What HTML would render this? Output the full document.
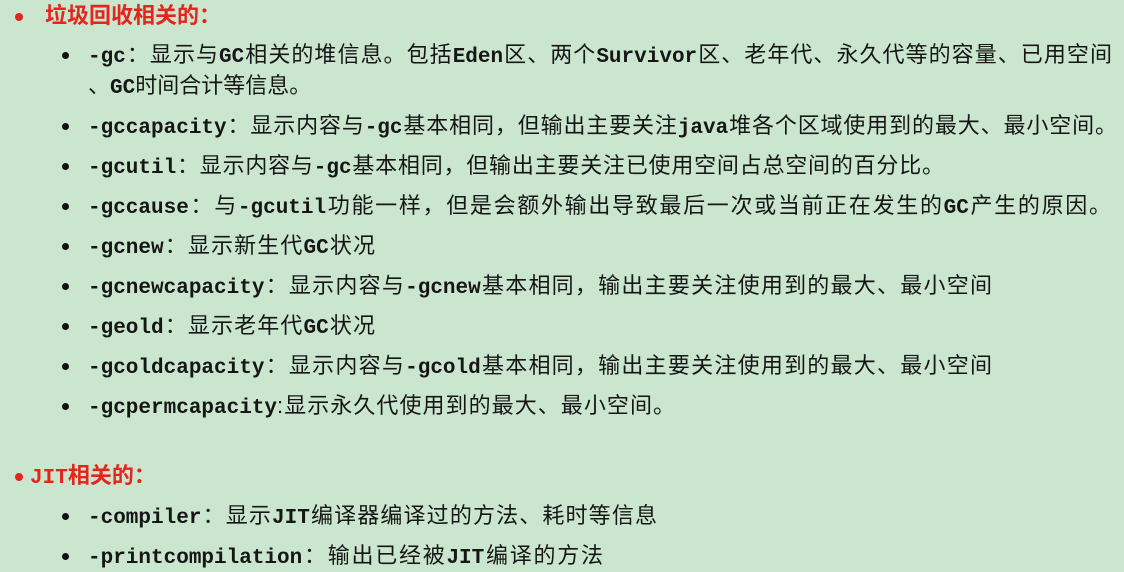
<!DOCTYPE html>
<html><head><meta charset="utf-8"><style>
body{margin:0;width:1124px;height:572px;background:#cbe6cf;overflow:hidden;position:relative;font-family:"Liberation Sans","Noto Sans CJK SC",sans-serif;color:#161616;font-size:22px}
.l{position:absolute;white-space:nowrap;line-height:26px;text-align:justify;text-align-last:justify;text-justify:inter-character}
.m{font-family:"Liberation Mono","Noto Sans CJK SC",monospace;font-weight:bold;font-size:21px}
.h{color:#e3251c;font-weight:bold;left:45px}
.rb{position:absolute;left:15px;width:8px;height:8px;border-radius:50%;background:#e3251c}
.b{position:absolute;left:62px;width:7px;height:7px;border-radius:50%;background:#111}
.t{left:88px}
</style></head><body>
<div class="rb" style="top:13px"></div><div class="l h" style="top:3px;width:170px">垃圾回收相关的：</div>
<div class="b" style="top:52px"></div><div class="l t" style="top:42px;width:1024px"><span class="m">-gc</span>：显示与<span class="m">GC</span>相关的堆信息。包括<span class="m">Eden</span>区、两个<span class="m">Survivor</span>区、老年代、永久代等的容量、已用空间</div>
<div class="l t" style="top:73px;width:218px">、<span class="m">GC</span>时间合计等信息。</div>
<div class="b" style="top:123px"></div><div class="l t" style="top:113px;width:1029px"><span class="m">-gccapacity</span>：显示内容与<span class="m">-gc</span>基本相同，但输出主要关注<span class="m">java</span>堆各个区域使用到的最大、最小空间。</div>
<div class="b" style="top:163px"></div><div class="l t" style="top:153px;width:856px"><span class="m">-gcutil</span>：显示内容与<span class="m">-gc</span>基本相同，但输出主要关注已使用空间占总空间的百分比。</div>
<div class="b" style="top:203px"></div><div class="l t" style="top:193px;width:1023px"><span class="m">-gccause</span>：与<span class="m">-gcutil</span>功能一样，但是会额外输出导致最后一次或当前正在发生的<span class="m">GC</span>产生的原因。</div>
<div class="b" style="top:243px"></div><div class="l t" style="top:233px;width:287px"><span class="m">-gcnew</span>：显示新生代<span class="m">GC</span>状况</div>
<div class="b" style="top:283px"></div><div class="l t" style="top:273px;width:904px"><span class="m">-gcnewcapacity</span>：显示内容与<span class="m">-gcnew</span>基本相同，输出主要关注使用到的最大、最小空间</div>
<div class="b" style="top:323px"></div><div class="l t" style="top:313px;width:287px"><span class="m">-geold</span>：显示老年代<span class="m">GC</span>状况</div>
<div class="b" style="top:363px"></div><div class="l t" style="top:353px;width:904px"><span class="m">-gcoldcapacity</span>：显示内容与<span class="m">-gcold</span>基本相同，输出主要关注使用到的最大、最小空间</div>
<div class="b" style="top:403px"></div><div class="l t" style="top:393px;width:587px"><span class="m">-gcpermcapacity</span>:显示永久代使用到的最大、最小空间。</div>
<div class="rb" style="top:473px"></div><div class="l h" style="top:463px;left:30px;width:122px"><span class="m">JIT</span>相关的：</div>
<div class="b" style="top:513px"></div><div class="l t" style="top:503px;width:569px"><span class="m">-compiler</span>：显示<span class="m">JIT</span>编译器编译过的方法、耗时等信息</div>
<div class="b" style="top:553px"></div><div class="l t" style="top:543px;width:515px"><span class="m">-printcompilation</span>：输出已经被<span class="m">JIT</span>编译的方法</div>
</body></html>
